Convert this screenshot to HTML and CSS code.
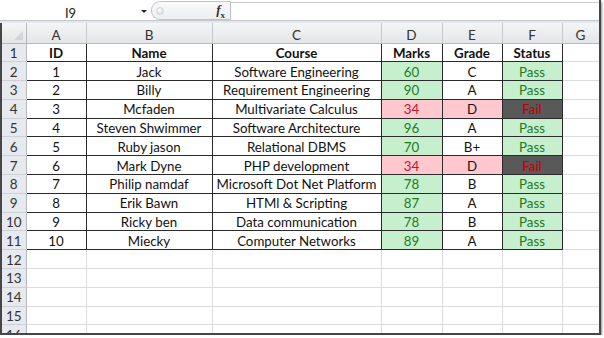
FILE: index.html
```html
<!DOCTYPE html>
<html lang="en">
<head>
  <meta charset="UTF-8" />
  <title>Student Marks</title>
  <link rel="stylesheet" href="styles.css">
</head>
<body>
  <div class="window">
    <!-- formula bar -->
    <div class="formula-bar">
      <div class="name-box">
        <span class="cell-ref">I9</span>
        <span class="arrow"></span>
      </div>
      <div class="fx-area">
        <span class="knob"></span>
        <span class="fx"><i>f</i><sub>x</sub></span>
      </div>
      <div class="formula-input"></div>
    </div>
    <div class="band"></div>

    <!-- grid -->
    <div class="grid-wrap">
      <table class="sheet">
        <colgroup>
          <col class="c-num"><col class="c-a"><col class="c-b"><col class="c-c">
          <col class="c-d"><col class="c-e"><col class="c-f"><col class="c-g">
        </colgroup>
        <thead>
          <tr>
            <th class="corner"><span class="tri"></span></th>
            <th>A</th><th>B</th><th>C</th><th>D</th><th>E</th><th>F</th><th>G</th>
          </tr>
        </thead>
        <tbody>
          <tr class="head-row">
            <th>1</th>
            <td class="d">ID</td><td class="d">Name</td><td class="d">Course</td>
            <td class="d">Marks</td><td class="d">Grade</td><td class="d">Status</td><td></td>
          </tr>
          <tr><th>2</th><td class="d">1</td><td class="d">Jack</td><td class="d">Software Engineering</td><td class="d good">60</td><td class="d">C</td><td class="d good">Pass</td><td></td></tr>
          <tr><th>3</th><td class="d">2</td><td class="d">Billy</td><td class="d">Requirement Engineering</td><td class="d good">90</td><td class="d">A</td><td class="d good">Pass</td><td></td></tr>
          <tr><th>4</th><td class="d">3</td><td class="d">Mcfaden</td><td class="d">Multivariate Calculus</td><td class="d bad">34</td><td class="d pink">D</td><td class="d fail">Fail</td><td></td></tr>
          <tr><th>5</th><td class="d">4</td><td class="d">Steven Shwimmer</td><td class="d">Software Architecture</td><td class="d good">96</td><td class="d">A</td><td class="d good">Pass</td><td></td></tr>
          <tr><th>6</th><td class="d">5</td><td class="d">Ruby jason</td><td class="d">Relational DBMS</td><td class="d good">70</td><td class="d">B+</td><td class="d good">Pass</td><td></td></tr>
          <tr><th>7</th><td class="d">6</td><td class="d">Mark Dyne</td><td class="d">PHP development</td><td class="d bad">34</td><td class="d pink">D</td><td class="d fail">Fail</td><td></td></tr>
          <tr><th>8</th><td class="d">7</td><td class="d">Philip namdaf</td><td class="d">Microsoft Dot Net Platform</td><td class="d good">78</td><td class="d">B</td><td class="d good">Pass</td><td></td></tr>
          <tr><th>9</th><td class="d">8</td><td class="d">Erik Bawn</td><td class="d">HTMl &amp; Scripting</td><td class="d good">87</td><td class="d">A</td><td class="d good">Pass</td><td></td></tr>
          <tr><th>10</th><td class="d">9</td><td class="d">Ricky ben</td><td class="d">Data communication</td><td class="d good">78</td><td class="d">B</td><td class="d good">Pass</td><td></td></tr>
          <tr><th>11</th><td class="d">10</td><td class="d">Miecky</td><td class="d">Computer Networks</td><td class="d good">89</td><td class="d">A</td><td class="d good">Pass</td><td></td></tr>
          <tr><th>12</th><td></td><td></td><td></td><td></td><td></td><td></td><td></td></tr>
          <tr><th>13</th><td></td><td></td><td></td><td></td><td></td><td></td><td></td></tr>
          <tr><th>14</th><td></td><td></td><td></td><td></td><td></td><td></td><td></td></tr>
          <tr><th>15</th><td></td><td></td><td></td><td></td><td></td><td></td><td></td></tr>
          <tr><th>16</th><td></td><td></td><td></td><td></td><td></td><td></td><td></td></tr>
        </tbody>
      </table>
    </div>
  </div>
</body>
</html>
```

FILE: styles.css
```css
/* ── BASE ─────────────────────────────────────────────── */
* { margin: 0; padding: 0; box-sizing: border-box; }
body {
  font-family: Lato, "Open Sans", sans-serif;
  background: #fff;
  color: #111;
}

/* ── WINDOW FRAME ─────────────────────────────────────── */
.window {
  width: 601px;
  height: 335px;
  border-right: 2px solid #464646;
  border-bottom: 2px solid #464646;
  box-shadow: 1px 2px 2px rgba(0,0,0,0.45);
  overflow: hidden;
  background: #fff;
  display: flex;
  flex-direction: column;
}

/* ── FORMULA BAR ──────────────────────────────────────── */
.formula-bar {
  height: 21px;
  display: flex;
  background: #fff;
  border-bottom: 1px solid #c3c6ca;
  flex-shrink: 0;
}
.name-box {
  width: 151px;
  padding: 5px 0 0 3px;
  display: flex;
  align-items: center;
}
.cell-ref {
  width: 135px;
  text-align: center;
  font-size: 13px;
  color: #222;
}
.arrow {
  width: 0; height: 0;
  margin: 0 0 2px 3px;
  border-left: 3px solid transparent;
  border-right: 3px solid transparent;
  border-top: 3px solid #222;
}
.fx-area {
  width: 80px;
  margin-top: 1px;
  height: 19px;
  border: 1px solid #c2c5c9;
  border-right-color: #b8bbbf;
  border-radius: 9px 0 0 9px;
  background: linear-gradient(#fafafa, #eceef0);
  display: flex;
  align-items: center;
  justify-content: space-between;
  padding: 0 5px 0 4px;
}
.knob {
  width: 8px; height: 8px;
  border-radius: 50%;
  background: radial-gradient(circle at 40% 35%, #fff, #cfd2d6);
  border: 1px solid #d4d7da;
}
.fx {
  font-family: "Liberation Serif", serif;
  font-size: 13px;
  font-weight: bold;
  color: #333;
}
.fx sub { font-size: 9px; }
.formula-input {
  flex: 1;
  margin-top: 2px;
  border-top: 1px solid #c7cacd;
  background: #fff;
}
.band {
  height: 2px;
  background: #e4e7eb;
  flex-shrink: 0;
}

/* ── GRID ─────────────────────────────────────────────── */
.grid-wrap {
  flex: 1;
  border-left: 2px solid #464646;
  overflow: hidden;
}
.sheet {
  border-collapse: collapse;
  table-layout: fixed;
  width: 597px;
  font-size: 13.3px;
}
.c-num { width: 24px; }
.c-a { width: 60px; }
.c-b { width: 126px; }
.c-c { width: 169px; }
.c-d { width: 61px; }
.c-e { width: 60px; }
.c-f { width: 60px; }
.c-g { width: 37px; }

.sheet thead th {
  height: 20px;
  padding-top: 4px;
  font-weight: normal;
  font-size: 13.5px;
  line-height: 14px;
  color: #333;
  background: linear-gradient(#f4f5f6, #e3e5e8);
  border-right: 1px solid #c5c8cc;
  border-bottom: 1px solid #b5b8bc;
  text-align: center;
}
.sheet thead th.corner {
  position: relative;
  border-right-color: #b5b8bc;
}
.tri {
  position: absolute;
  right: 3px; bottom: 3px;
  width: 0; height: 0;
  border-left: 9px solid transparent;
  border-bottom: 9px solid #d2d5d9;
}
.sheet tbody th {
  height: 18.8px;
  padding-top: 2px;
  font-weight: normal;
  color: #333;
  background: #e6e9ed;
  border-right: 1px solid #b5b8bc;
  border-bottom: 1px solid #cdd0d4;
  text-align: center;
  font-size: 13.5px;
  line-height: 15px;
}
.sheet td {
  height: 18.8px;
  padding-top: 2px;
  border: 1px solid #dadcdd;
  text-align: center;
  white-space: nowrap;
  line-height: 15px;
}

/* ── DATA CELLS ───────────────────────────────────────── */
.sheet td.d { border: 1px solid #2a2a2a; }
.head-row td.d { font-weight: bold; }
.good { background: #c6efce; color: #1f7a1f; }
.bad { background: #ffc7ce; color: #c0142a; }
.pink { background: #ffc7ce; }
.fail { background: #595959; color: #c00000; }
```
